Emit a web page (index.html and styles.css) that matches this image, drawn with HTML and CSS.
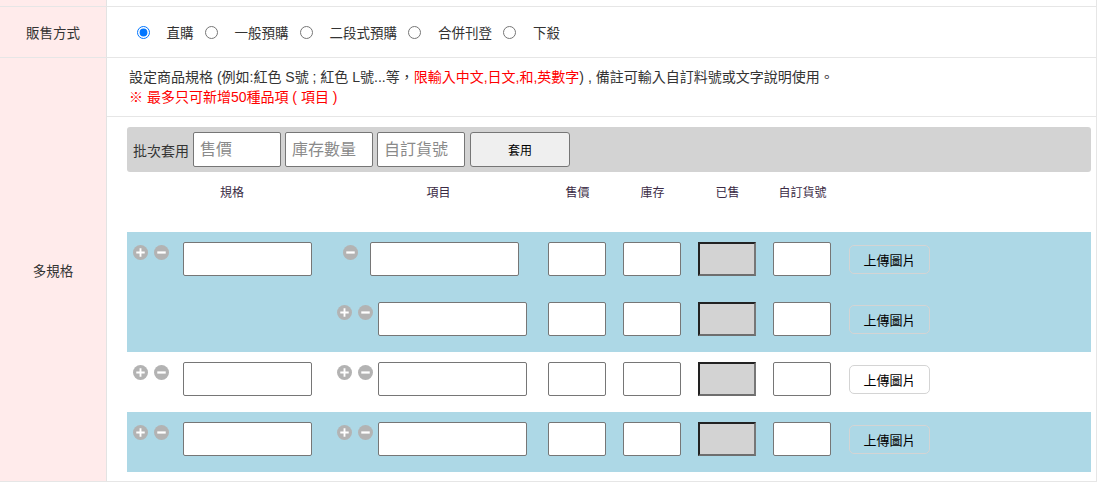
FILE: index.html
```html
<!DOCTYPE html>
<html lang="zh-Hant">
<head>
  <meta charset="UTF-8">
  <title>商品規格</title>
  <link rel="stylesheet" href="styles.css">
</head>
<body>

  <div class="form">
    <div class="label cut"></div>
    <div class="field cut"></div>

    <div class="label">販售方式</div>
    <div class="field sale">
      <input type="radio" name="sale" checked><span class="opt">直購</span>
      <input type="radio" name="sale"><span class="opt">一般預購</span>
      <input type="radio" name="sale"><span class="opt">二段式預購</span>
      <input type="radio" name="sale"><span class="opt">合併刊登</span>
      <input type="radio" name="sale"><span class="opt">下殺</span>
    </div>

    <div class="label tall">多規格</div>
    <div class="field note">
      <div>設定商品規格 (例如:紅色 S號 ; 紅色 L號...等，<span class="red">限輸入中文,日文,和,英數字</span>) , 備註可輸入自訂料號或文字說明使用。</div>
      <div class="red">※ 最多只可新增50種品項 ( 項目 )</div>
    </div>
    <div class="field spec">

      <div class="batch">
        <span>批次套用</span>
        <input type="text" class="batch-in" placeholder="售價">
        <input type="text" class="batch-in" placeholder="庫存數量">
        <input type="text" class="batch-in" placeholder="自訂貨號">
        <button class="batch-btn">套用</button>
      </div>

      <div class="grid head">
        <div>規格</div>
        <div>項目</div>
        <div>售價</div>
        <div>庫存</div>
        <div>已售</div>
        <div>自訂貨號</div>
        <div></div>
      </div>

      <!-- 規格 1：兩個項目 -->
      <div class="grid blue">
        <div class="c-spec two">
          <svg class="ico" viewBox="0 0 16 16"><circle cx="8" cy="8" r="8" fill="#b3b3b3"/><path d="M8 3.5v9M3.5 8h9" stroke="#fff" stroke-width="2"/></svg>
          <svg class="ico gap" viewBox="0 0 16 16"><circle cx="8" cy="8" r="8" fill="#b3b3b3"/><path d="M3.5 8h9" stroke="#fff" stroke-width="2.4"/></svg>
          <input type="text" class="in-spec">
        </div>
        <div class="c-item first">
          <svg class="ico" viewBox="0 0 16 16"><circle cx="8" cy="8" r="8" fill="#b3b3b3"/><path d="M3.5 8h9" stroke="#fff" stroke-width="2.4"/></svg>
          <input type="text" class="in-item">
        </div>
        <div class="c-num"><input type="text" class="in-num"></div>
        <div class="c-num"><input type="text" class="in-num"></div>
        <div class="c-num"><input type="text" class="in-num sold" disabled></div>
        <div class="c-num"><input type="text" class="in-num"></div>
        <div class="c-up"><button class="up">上傳圖片</button></div>

        <div class="c-item">
          <svg class="ico" viewBox="0 0 16 16"><circle cx="8" cy="8" r="8" fill="#b3b3b3"/><path d="M8 3.5v9M3.5 8h9" stroke="#fff" stroke-width="2"/></svg>
          <svg class="ico gap" viewBox="0 0 16 16"><circle cx="8" cy="8" r="8" fill="#b3b3b3"/><path d="M3.5 8h9" stroke="#fff" stroke-width="2.4"/></svg>
          <input type="text" class="in-item">
        </div>
        <div class="c-num"><input type="text" class="in-num"></div>
        <div class="c-num"><input type="text" class="in-num"></div>
        <div class="c-num"><input type="text" class="in-num sold" disabled></div>
        <div class="c-num"><input type="text" class="in-num"></div>
        <div class="c-up"><button class="up">上傳圖片</button></div>
      </div>

      <!-- 規格 2 -->
      <div class="grid">
        <div class="c-spec">
          <svg class="ico" viewBox="0 0 16 16"><circle cx="8" cy="8" r="8" fill="#b3b3b3"/><path d="M8 3.5v9M3.5 8h9" stroke="#fff" stroke-width="2"/></svg>
          <svg class="ico gap" viewBox="0 0 16 16"><circle cx="8" cy="8" r="8" fill="#b3b3b3"/><path d="M3.5 8h9" stroke="#fff" stroke-width="2.4"/></svg>
          <input type="text" class="in-spec">
        </div>
        <div class="c-item">
          <svg class="ico" viewBox="0 0 16 16"><circle cx="8" cy="8" r="8" fill="#b3b3b3"/><path d="M8 3.5v9M3.5 8h9" stroke="#fff" stroke-width="2"/></svg>
          <svg class="ico gap" viewBox="0 0 16 16"><circle cx="8" cy="8" r="8" fill="#b3b3b3"/><path d="M3.5 8h9" stroke="#fff" stroke-width="2.4"/></svg>
          <input type="text" class="in-item">
        </div>
        <div class="c-num"><input type="text" class="in-num"></div>
        <div class="c-num"><input type="text" class="in-num"></div>
        <div class="c-num"><input type="text" class="in-num sold" disabled></div>
        <div class="c-num"><input type="text" class="in-num"></div>
        <div class="c-up"><button class="up white">上傳圖片</button></div>
      </div>

      <!-- 規格 3 -->
      <div class="grid blue">
        <div class="c-spec">
          <svg class="ico" viewBox="0 0 16 16"><circle cx="8" cy="8" r="8" fill="#b3b3b3"/><path d="M8 3.5v9M3.5 8h9" stroke="#fff" stroke-width="2"/></svg>
          <svg class="ico gap" viewBox="0 0 16 16"><circle cx="8" cy="8" r="8" fill="#b3b3b3"/><path d="M3.5 8h9" stroke="#fff" stroke-width="2.4"/></svg>
          <input type="text" class="in-spec">
        </div>
        <div class="c-item">
          <svg class="ico" viewBox="0 0 16 16"><circle cx="8" cy="8" r="8" fill="#b3b3b3"/><path d="M8 3.5v9M3.5 8h9" stroke="#fff" stroke-width="2"/></svg>
          <svg class="ico gap" viewBox="0 0 16 16"><circle cx="8" cy="8" r="8" fill="#b3b3b3"/><path d="M3.5 8h9" stroke="#fff" stroke-width="2.4"/></svg>
          <input type="text" class="in-item">
        </div>
        <div class="c-num"><input type="text" class="in-num"></div>
        <div class="c-num"><input type="text" class="in-num"></div>
        <div class="c-num"><input type="text" class="in-num sold" disabled></div>
        <div class="c-num"><input type="text" class="in-num"></div>
        <div class="c-up"><button class="up">上傳圖片</button></div>
      </div>

    </div>
  </div>

</body>
</html>
```

FILE: styles.css
```css
body { margin: 0; font-family: "Liberation Sans", "Noto Sans CJK TC", sans-serif; font-size: 14px; color: #333; background: #fff; }
input, button { font-family: "Liberation Sans", "Noto Sans CJK TC", sans-serif; box-sizing: border-box; }

.form { display: grid; grid-template-columns: 107px 990px; width: 1097px; }
.label { background: #ffebeb; border-right: 1px solid #e3e3e3; border-bottom: 1px solid #e6e6e6; display: flex; align-items: center; justify-content: center; font-size: 13.5px; }
.field { border-bottom: 1px solid #e6e6e6; border-right: 1px solid #e6e6e6; }
.cut { height: 6px; }
.tall { grid-row: span 2; }

.sale { height: 50px; display: flex; align-items: center; padding-left: 29.5px; font-size: 13.5px; }
.sale input { margin: 0; width: 13px; height: 13px; }
.opt { margin: 0 11px 0 17px; }

.note { height: 58px; padding-left: 22px; display: flex; flex-direction: column; justify-content: center; line-height: 20px; font-size: 14px; }
.red { color: #f00; }

.spec { padding: 10px 5px 9px 20px; }

.batch { height: 45px; background: #d3d3d3; border-radius: 3px; display: flex; align-items: center; padding-left: 6px; }
.batch-in { width: 88px; height: 35px; margin-left: 4px; border: 1px solid #767676; border-radius: 2px; font-size: 16px; padding: 0 6px; }
.batch-in::placeholder { color: #8a8a8a; }
.batch-in + .batch-in { margin-left: 4px; }
.batch-btn { width: 100px; height: 35px; margin-left: 5px; background: #efefef; border: 1px solid #767676; border-radius: 3px; font-size: 12px; color: #000; }

.grid { display: grid; grid-template-columns: 210px 203px 75px 75px 75px 75px 1fr; grid-auto-rows: 60px; }
.grid.head { font-size: 12px; color: #3a2a44; }
.head div { text-align: center; padding-top: 11px; }
.blue { background: #add8e6; }

.c-spec, .c-item, .c-num, .c-up { display: flex; align-items: flex-start; padding-top: 10px; }
.c-spec { padding-left: 6px; }
.c-spec.two { grid-row: span 2; }
.ico { width: 15px; height: 15px; margin-top: 3px; flex: none; }
.ico.gap { margin-left: 6px; }
.c-item.first { padding-left: 6px; }

.in-spec { width: 129px; height: 34px; margin-left: 14px; border: 1px solid #767676; border-radius: 2px; }
.in-item { width: 149px; height: 34px; margin-left: 5px; border: 1px solid #767676; border-radius: 2px; }
.first .in-item { margin-left: 12px; }
.in-num { width: 58px; height: 34px; margin-left: 8px; border: 1px solid #767676; border-radius: 2px; }
.sold { background: #d3d3d3; border-width: 2px; border-color: #222 #777 #6e6e6e #222; border-radius: 0; }

.up { width: 81px; height: 29px; margin: 3px 0 0 9px; background: transparent; border: 1px solid #d4d4d4; border-radius: 5px; font-size: 13px; color: #000; }
.up.white { background: #fff; }
```
